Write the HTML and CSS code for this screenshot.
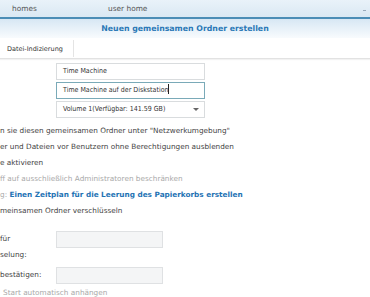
FILE: index.html
```html
<!DOCTYPE html>
<html lang="de">
<head>
    <meta charset="UTF-8">
    <title>Neuen gemeinsamen Ordner erstellen</title>
    <link rel="stylesheet" href="styles.css">
</head>
<body>

<div class="screen">
    <div class="list-row">
        <span class="cell cell-name">homes</span>
        <span class="cell cell-desc">user home</span>
        <span class="row-mark"></span>
    </div>

    <div class="dialog">
        <div class="dialog-title">Neuen gemeinsamen Ordner erstellen</div>

        <div class="tabs">
            <div class="tab">Datei-Indizierung</div>
        </div>

        <div class="form">
            <div class="field">
                <div class="input">Time Machine</div>
            </div>
            <div class="field">
                <div class="input focused">Time Machine auf der Diskstation<span class="caret"></span></div>
            </div>
            <div class="field">
                <div class="input select">
                    <span>Volume 1(Verfügbar: 141.59 GB)</span>
                    <span class="arrow"></span>
                </div>
            </div>

            <div class="options">
                <div class="option">n sie diesen gemeinsamen Ordner unter "Netzwerkumgebung"</div>
                <div class="option">er und Dateien vor Benutzern ohne Berechtigungen ausblenden</div>
                <div class="option">e aktivieren</div>
                <div class="option disabled">ff auf ausschließlich Administratoren beschränken</div>
                <div class="option"><span class="muted">g:</span> <a class="link" href="#">Einen Zeitplan für die Leerung des Papierkorbs erstellen</a></div>
                <div class="option">meinsamen Ordner verschlüsseln</div>
            </div>

            <div class="pw-row">
                <div class="pw-label">für<br>selung:</div>
                <div class="input disabled-box"></div>
            </div>
            <div class="pw-row second">
                <div class="pw-label">bestätigen:</div>
                <div class="input disabled-box"></div>
            </div>

            <div class="option disabled auto">Start automatisch anhängen</div>
        </div>
    </div>
</div>

</body>
</html>
```

FILE: styles.css
```css
body {
    margin: 0;
    font-family: "DejaVu Sans", Verdana, sans-serif;
    font-size: 7.3px;
    color: #444;
    background: white;
}
.screen {
    width: 370px;
    height: 297px;
    overflow: hidden;
}
.list-row {
    height: 17px;
    display: flex;
    align-items: center;
    background: linear-gradient(#e9f2f9, #dae8f3);
    border-bottom: 2px solid #4b8db6;
    color: #555;
    font-size: 7.4px;
}
.cell-name {
    padding-left: 12px;
    width: 96px;
}
.cell-desc {
    flex: 1;
}
.row-mark {
    width: 3px;
    height: 1px;
    background: #9ab;
    margin-right: 4px;
    margin-top: 3px;
}
.dialog-title {
    height: 19px;
    line-height: 20px;
    text-align: center;
    font-weight: bold;
    font-size: 7.8px;
    color: #2a78b6;
    background: linear-gradient(#d7e7f4, #f8fbfd);
}
.tabs {
    height: 20px;
    display: flex;
    border-bottom: 1px solid #e2e2e2;
    box-shadow: 0 1px 1px rgba(0,0,0,0.05);
}
.tab {
    font-size: 6.5px;
    color: #333;
    padding: 0 10px 0 7px;
    line-height: 18px;
    margin: 2px 0 1px;
    border-right: 1px solid #e4e4e4;
}
.form {
    padding-top: 4px;
}
.field {
    padding-left: 56px;
    margin-bottom: 2px;
}
.input {
    width: 141px;
    height: 15px;
    line-height: 15px;
    border: 1px solid #d9dcde;
    padding-left: 6px;
    color: #333;
    background: white;
    font-family: "DejaVu Sans Condensed", "DejaVu Sans", sans-serif;
    font-stretch: condensed;
    font-size: 7px;
    white-space: nowrap;
}
.focused {
    border-color: #7aaab8;
}
.caret {
    display: inline-block;
    width: 1px;
    height: 10px;
    background: #222;
    vertical-align: -2px;
}
.select {
    display: flex;
    justify-content: space-between;
    align-items: center;
}
.arrow {
    width: 0;
    height: 0;
    border-left: 3px solid transparent;
    border-right: 3px solid transparent;
    border-top: 3px solid #666;
    margin-right: 5px;
}
.options {
    margin-top: 5px;
}
.option {
    height: 16px;
    line-height: 16px;
    white-space: nowrap;
}
.disabled, .muted {
    color: #a9a9a9;
}
.link {
    color: #1f73b4;
    font-weight: bold;
    text-decoration: none;
}
.pw-row {
    display: flex;
    margin-top: 12px;
}
.pw-row.second {
    margin-top: 4px;
}
.pw-label {
    width: 56px;
    line-height: 16px;
    color: #444;
}
.disabled-box {
    width: 99px;
    background: #f4f5f6;
    border-color: #dfe1e3;
}
.auto {
    padding-left: 3px;
    margin-top: 1px;
}
```
